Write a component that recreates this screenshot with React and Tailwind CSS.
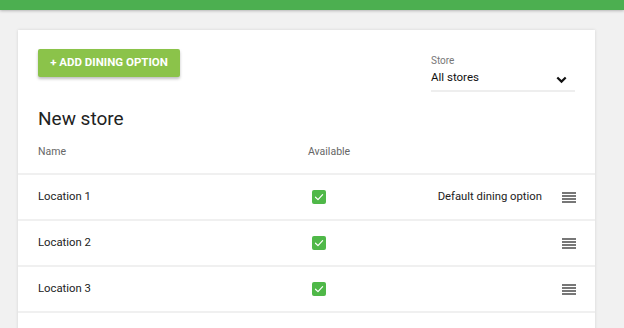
import React from "react";

function Check() {
  return (
    <div className="w-[14px] h-[14px] rounded-[2px] bg-[#4fb848] flex items-center justify-center">
      <svg width="10" height="10" viewBox="0 0 10 10" fill="none">
        <path d="M1.5 5.2 L4 7.6 L8.6 2.6" stroke="white" strokeWidth="1.2" strokeLinecap="round" strokeLinejoin="round" />
      </svg>
    </div>
  );
}

function Handle() {
  return (
    <div className="w-[14px] flex flex-col gap-[1px]">
      <div className="h-[2px] bg-[#777]" />
      <div className="h-[2px] bg-[#777]" />
      <div className="h-[2px] bg-[#777]" />
      <div className="h-[2px] bg-[#777]" />
    </div>
  );
}

function Row({ name, extra }) {
  return (
    <div className="h-[46px] border-t-2 border-[#f0f0f0] flex items-center pl-5 pr-[19px]">
      <div className="w-[274px] text-[11.3px] text-[#222]">{name}</div>
      <Check />
      <div className="flex-1 flex justify-end items-center">
        {extra && <span className="text-[11.3px] text-[#222] mr-[20px]">{extra}</span>}
        <Handle />
      </div>
    </div>
  );
}

export default function App() {
  return (
    <div className="w-[624px] h-[328px] overflow-hidden bg-[#f1f1f1]" style={{ fontFamily: "Roboto, 'Liberation Sans', sans-serif" }}>
      <div className="h-[10px] bg-[#4caf50] shadow-[0_1px_3px_rgba(0,0,0,0.25)]" />
      <div className="mt-[20px] ml-[18px] w-[577px] h-[320px] bg-white shadow-[0_0_3px_rgba(0,0,0,0.12)]">
        <div className="flex justify-between px-5 pt-[19px]">
          <button className="h-[28px] w-[142px] bg-[#8bc34a] text-white text-[11.5px] font-bold rounded-[2px] shadow-[0_2px_3px_rgba(0,0,0,0.25)]">
            + ADD DINING OPTION
          </button>
          <div className="w-[144px] mt-[6px]">
            <div className="text-[10px] text-[#777] leading-[12px]">Store</div>
            <div className="flex items-center justify-between h-[25px] border-b-2 border-[#eeeeee] pb-[3px]">
              <span className="text-[11.5px] text-[#111] leading-[16px] mb-[1px]">All stores</span>
              <svg width="11" height="8" viewBox="0 0 11 8" className="mt-[6px] mr-[8px]">
                <path d="M1.3 1.5 L5.5 5.6 L9.7 1.5" stroke="#111" strokeWidth="2.2" fill="none" />
              </svg>
            </div>
          </div>
        </div>
        <div className="px-5 mt-[15px] text-[19px] leading-[24px] text-[#222]">New store</div>
        <div className="flex px-5 mt-[9px] h-[33px] pt-[4px]">
          <div className="w-[270px] text-[10.5px] text-[#666]">Name</div>
          <div className="text-[10.5px] text-[#666]">Available</div>
        </div>
        <Row name="Location 1" extra="Default dining option" />
        <Row name="Location 2" />
        <Row name="Location 3" />
        <div className="border-t-2 border-[#f0f0f0]" />
      </div>
    </div>
  );
}
